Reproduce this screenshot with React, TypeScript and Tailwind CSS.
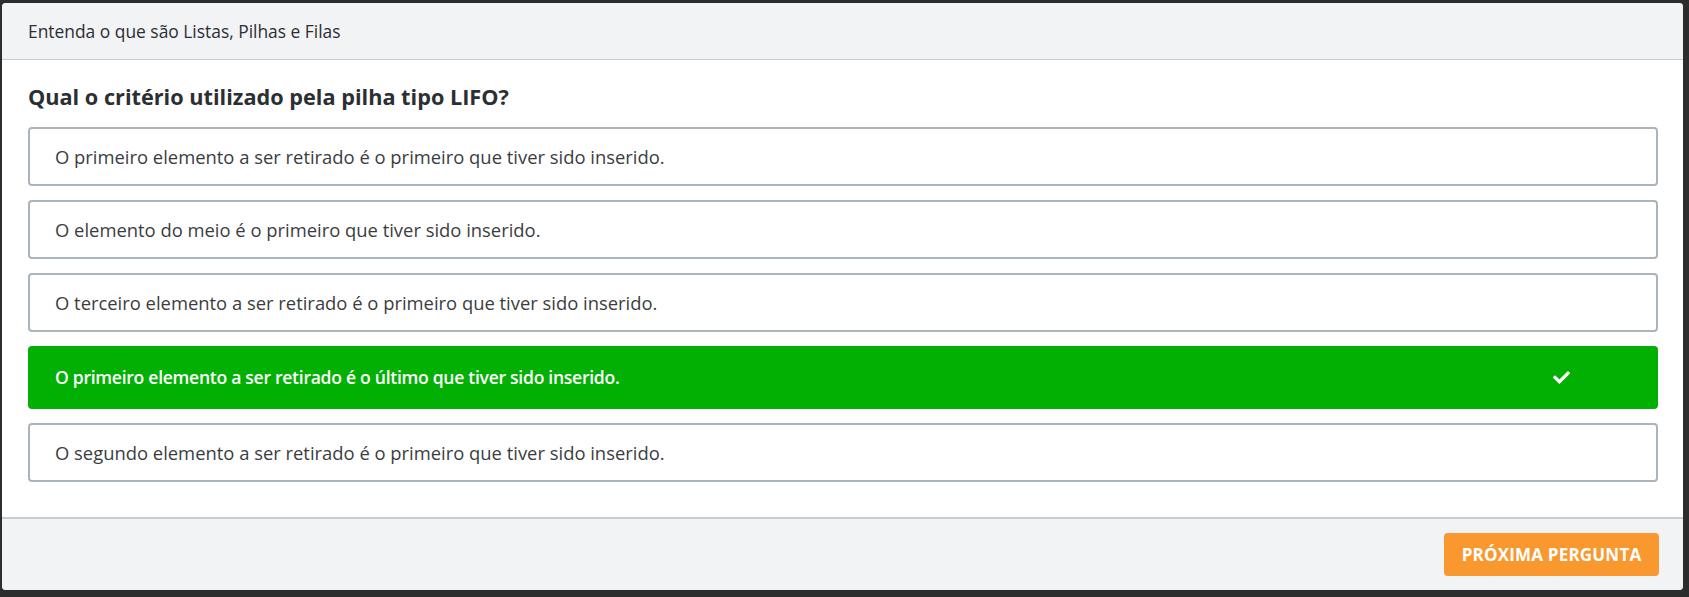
const options = [
  { text: 'O primeiro elemento a ser retirado é o primeiro que tiver sido inserido.', correct: false },
  { text: 'O elemento do meio é o primeiro que tiver sido inserido.', correct: false },
  { text: 'O terceiro elemento a ser retirado é o primeiro que tiver sido inserido.', correct: false },
  { text: 'O primeiro elemento a ser retirado é o último que tiver sido inserido.', correct: true },
  { text: 'O segundo elemento a ser retirado é o primeiro que tiver sido inserido.', correct: false },
];

const CheckIcon = () => (
  <svg viewBox="0 0 512 512" className="w-[17px] h-[17px]" fill="white">
    <path d="M173.898 439.404l-166.4-166.4c-9.997-9.997-9.997-26.206 0-36.204l36.203-36.204c9.997-9.998 26.207-9.998 36.204 0L192 312.69 432.095 72.596c9.997-9.997 26.207-9.997 36.204 0l36.203 36.204c9.997 9.997 9.997 26.206 0 36.204l-294.4 294.401c-9.998 9.997-26.207 9.997-36.204-.001z" />
  </svg>
);

export default function App() {
  return (
    <div className="w-full h-[597px] bg-[#2d2d2d] pt-[3px] pl-[2px] pr-[6px] pb-[7px] font-['Open_Sans',sans-serif]">
      <div className="w-full h-full bg-white rounded-[4px] overflow-hidden flex flex-col">
        {/* header */}
        <div className="h-[57px] shrink-0 bg-[#f2f3f5] border-b border-[#c8ccd1] flex items-center pl-[26px] text-[17.4px] text-[#2b2f33]">
          Entenda o que são Listas, Pilhas e Filas
        </div>

        {/* body */}
        <div className="flex-1 pl-[26px] pr-[25px] pt-[21px]">
          <h2 className="text-[21.7px] font-bold text-[#2b2f33] leading-[32px] mb-[14px]">
            Qual o critério utilizado pela pilha tipo LIFO?
          </h2>
          <div className="flex flex-col gap-[14px]">
            {options.map((o) =>
              o.correct ? (
                <div
                  key={o.text}
                  className="h-[63px] rounded-[4px] bg-[#02b003] flex items-center justify-between pl-[27px] pr-[88px] text-[17.6px] tracking-[-0.3px] font-semibold text-white"
                >
                  <span>{o.text}</span>
                  <CheckIcon />
                </div>
              ) : (
                <div
                  key={o.text}
                  className="h-[59px] rounded-[4px] border-2 border-[#abb3bb] flex items-center pl-[25px] text-[18.4px] text-[#3a3d40]"
                >
                  {o.text}
                </div>
              )
            )}
          </div>
        </div>

        {/* footer */}
        <div className="h-[73px] shrink-0 bg-[#f2f3f5] border-t-2 border-[#c8ccd1] flex justify-end pt-[14px] pr-[24px]">
          <button className="h-[43px] w-[215px] rounded-[4px] bg-[#f9982e] text-white font-bold text-[17px] tracking-[0.2px]">
            PRÓXIMA PERGUNTA
          </button>
        </div>
      </div>
    </div>
  );
}
